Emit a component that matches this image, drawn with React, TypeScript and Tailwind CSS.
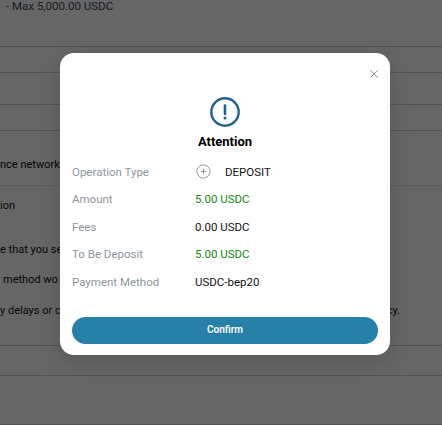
import React from "react";

const rows = [
  { label: "Amount", value: "5.00 USDC", green: true },
  { label: "Fees", value: "0.00 USDC", green: false },
  { label: "To Be Deposit", value: "5.00 USDC", green: true },
  { label: "Payment Method", value: "USDC-bep20", green: false },
];

export default function App() {
  return (
    <div className="relative w-[442px] h-[425px] overflow-hidden bg-white font-['Roboto',sans-serif] text-[11px] leading-[16px] text-[#111]">
      {/* page behind the dialog */}
      <div className="flex flex-col">
        <div className="h-[47px] border-b border-[#ccc] pl-[6px] text-[11.5px] text-[#3a4d5c] leading-[13px]">- Max 5,000.00 USDC</div>
        <div className="h-[26px] border-b border-[#ccc]" />
        <div className="h-[32px] border-b border-[#ccc]" />
        <div className="h-[26px] border-b border-[#ccc]" />
        <div className="h-[55px] border-b border-[#e4e4e4] pt-[26px] whitespace-nowrap">nce network</div>
        <div className="h-[159px] flex flex-col whitespace-nowrap">
          <span className="mt-[12px]">ion</span>
          <span className="mt-[28px]">e that you se</span>
          <span className="mt-[14px] ml-[3px]">method wo</span>
          <div className="flex justify-between w-[400px] mt-[15px]">
            <span>y delays or c</span>
            <span>cy.</span>
          </div>
        </div>
        <div className="h-[31px] border-y border-[#ccc]" />
        <div className="h-[49px] border-b border-[#ccc]" />
      </div>

      {/* overlay */}
      <div className="absolute inset-0 bg-black/60" />

      {/* dialog */}
      <div className="absolute left-[60px] top-[53px] w-[330px] h-[302px] bg-white rounded-[14px] shadow-[0_6px_24px_rgba(0,0,0,0.15)] px-[12px] flex flex-col">
        <button className="absolute right-[12px] top-[17px] text-[#8a8a8a]">
          <svg width="8" height="8" viewBox="0 0 8 8" fill="none" stroke="currentColor" strokeWidth="1">
            <path d="M0.5 0.5l7 7M7.5 0.5l-7 7" />
          </svg>
        </button>
        <div className="flex flex-col items-center mt-[44px]">
          <svg width="30" height="30" viewBox="0 0 30 30" fill="none">
            <circle cx="15" cy="15" r="13.7" stroke="#1f6491" strokeWidth="2.4" />
            <path d="M15 8.5v8.5" stroke="#1f6491" strokeWidth="2.6" strokeLinecap="round" />
            <circle cx="15" cy="21" r="1.5" fill="#1f6491" />
          </svg>
          <h2 className="mt-[7px] text-[13px] leading-[16px] font-bold text-black">Attention</h2>
        </div>
        <div className="mt-[8px] flex flex-col text-[11.5px]">
          <div className="flex items-center h-[27.5px]">
            <span className="w-[123px] text-[#8c959d]">Operation Type</span>
            <svg width="15" height="15" viewBox="0 0 15 15" fill="none" stroke="#888" className="ml-[1px]">
              <circle cx="7.5" cy="7.5" r="6.6" strokeWidth="0.9" />
              <path d="M7.5 4.8v5.4M4.8 7.5h5.4" strokeWidth="0.9" />
            </svg>
            <span className="ml-[14px] text-[#111]">DEPOSIT</span>
          </div>
          {rows.map((r) => (
            <div key={r.label} className="flex items-center h-[27.5px]">
              <span className="w-[123px] text-[#8c959d]">{r.label}</span>
              <span className={r.green ? "text-[#118a11]" : "text-[#111]"}>{r.value}</span>
            </div>
          ))}
        </div>
        <button className="mt-[21px] h-[27px] w-full rounded-full bg-[#2680a8] text-white text-[10px] font-semibold">Confirm</button>
      </div>
    </div>
  );
}
